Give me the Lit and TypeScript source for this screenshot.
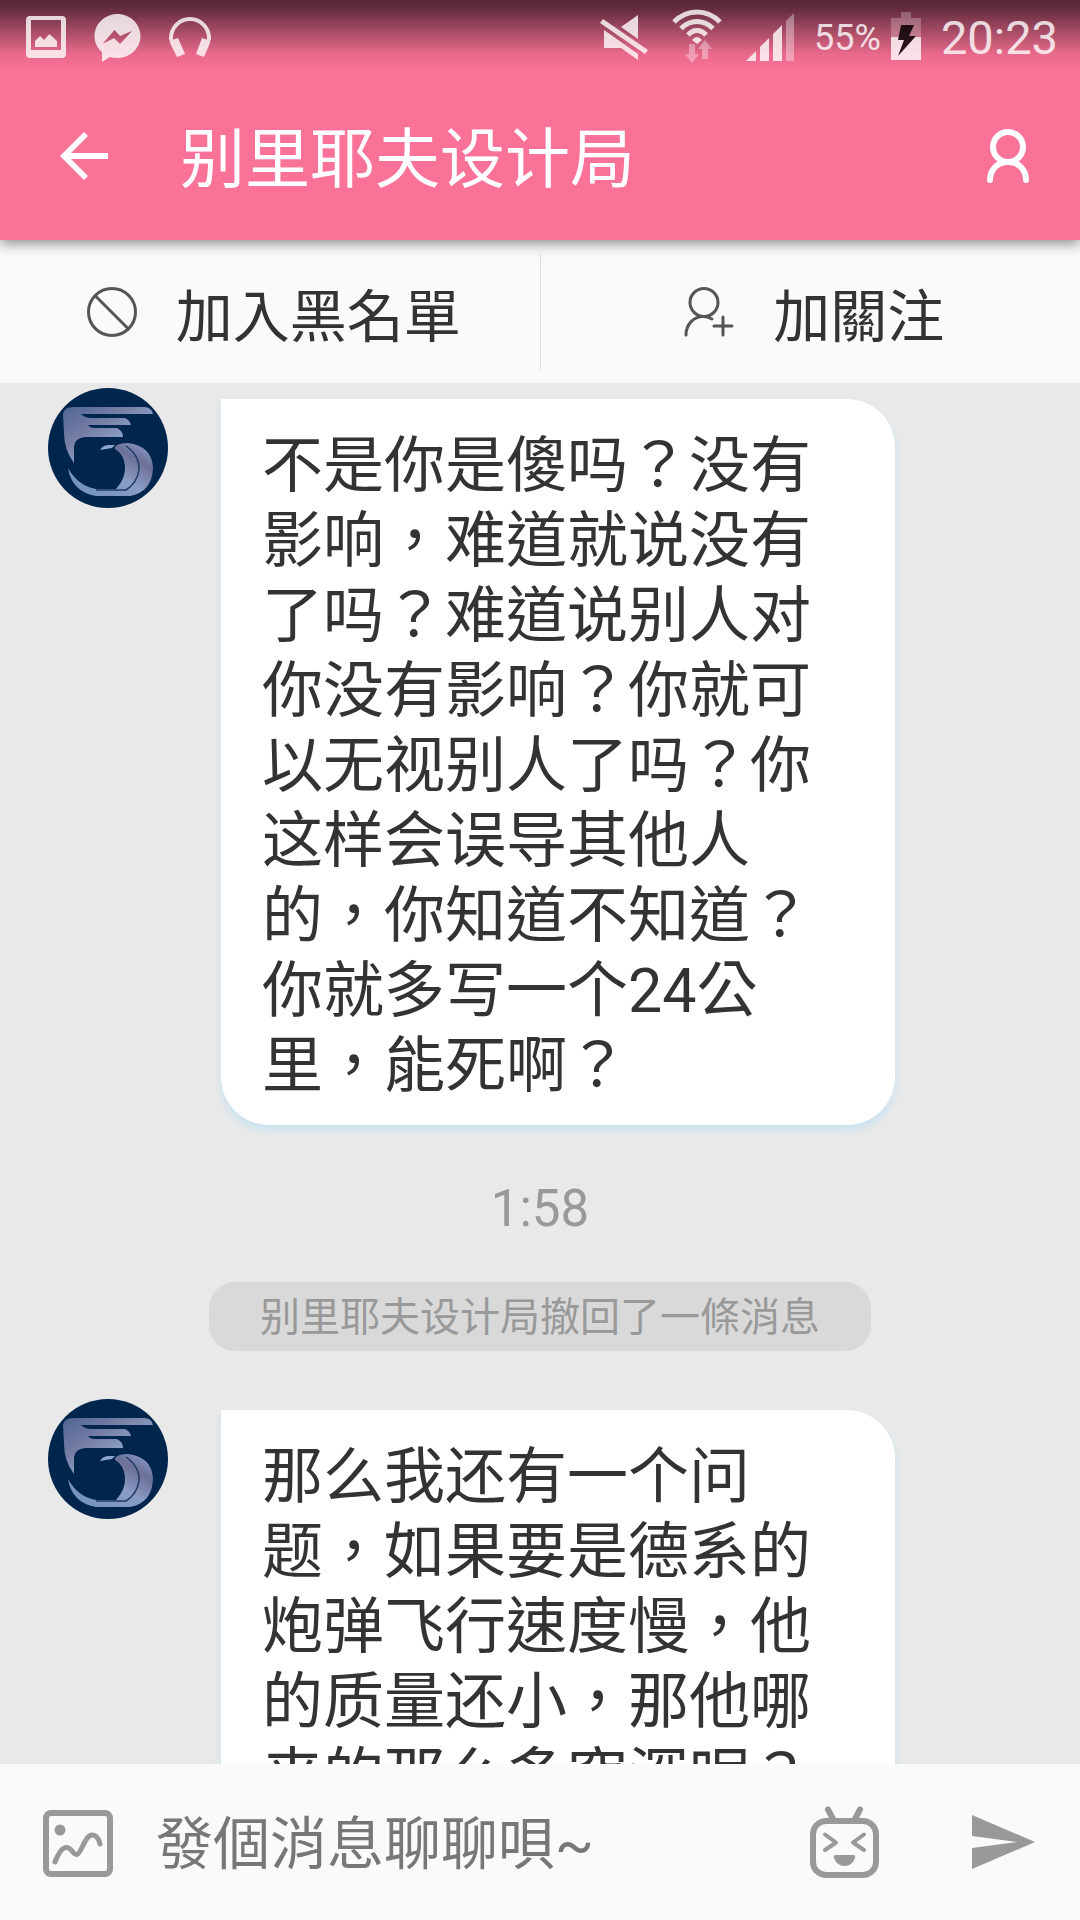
import { LitElement, html, css } from "lit";
import { customElement, property } from "lit/decorators.js";

type Entry =
  | { kind: "message"; text: string }
  | { kind: "time"; text: string }
  | { kind: "notice"; text: string };

const CONTACT = "别里耶夫设计局";

const ENTRIES: Entry[] = [
  {
    kind: "message",
    text: "不是你是傻吗？没有影响，难道就说没有了吗？难道说别人对你没有影响？你就可以无视别人了吗？你这样会误导其他人的，你知道不知道？你就多写一个24公里，能死啊？",
  },
  { kind: "time", text: "1:58" },
  { kind: "notice", text: "别里耶夫设计局撤回了一條消息" },
  {
    kind: "message",
    text: "那么我还有一个问题，如果要是德系的炮弹飞行速度慢，他的质量还小，那他哪来的那么多穿深呢？",
  },
];

@customElement("status-bar")
export class StatusBar extends LitElement {
  static styles = css`
    :host {
      display: flex;
      justify-content: space-between;
      height: 76px;
      padding: 0 22px 0 26px;
      color: #fff;
    }
    .group {
      display: flex;
      align-items: center;
      opacity: 0.8;
    }
    .left {
      gap: 28px;
    }
    .right {
      gap: 20px;
    }
    .signals {
      display: flex;
      gap: 24px;
    }
    svg {
      display: block;
      flex: none;
      height: 76px;
      fill: currentColor;
    }
    .power {
      display: flex;
      align-items: center;
      gap: 10px;
      font-size: 36px;
      line-height: 76px;
    }
    .clock {
      font-size: 47px;
      line-height: 76px;
    }
  `;

  render() {
    return html`
      <div class="group left">
        <svg width="40" viewBox="0 0 40 76" aria-hidden="true">
          <path fill-rule="evenodd" d="M4 16H36Q40 16 40 20V54Q40 58 36 58H4Q0 58 0 54V20Q0 16 4 16ZM5 20V50H35V20Z" />
          <path d="M9 47V41L14 36L18 40L23.500 34L31 41V47Z" />
        </svg>
        <svg width="47" viewBox="0 0 47 76" aria-hidden="true">
          <path
            fill-rule="evenodd"
            d="M23.500 14C36 14 46.500 24 46.500 36S36 58 23.500 58Q19 58 16 57L8 62V52C3 48 0.500 42 0.500 36C0.500 24 11 14 23.500 14ZM8.500 44L20.500 30L26 36L38 31L26 44L20 38Z"
          />
        </svg>
        <svg width="42" viewBox="0 0 42 76" aria-hidden="true">
          <path d="M2 40V38A19 19 0 0 1 40 38V40" fill="none" stroke="currentColor" stroke-width="4" />
          <path d="M0 36L3 40L9 38L16 54L8 57L1 43ZM42 36L39 40L33 38L27 54L35 57L41 43Z" />
        </svg>
      </div>
      <div class="group right">
        <div class="signals">
          <svg width="48" viewBox="0 0 48 76" aria-hidden="true">
            <path d="M21 27L38 15V39ZM4 30L38 54V60L21 48H4Z" />
            <path d="M3 19L48 50L45 54L0 23Z" />
          </svg>
          <svg width="50" viewBox="0 0 50 76" aria-hidden="true">
            <g fill="none" stroke="currentColor" stroke-width="5">
              <path d="M2 22Q12 12 25 12T48 22" />
              <path d="M9 28.500Q16 21.500 25 21.500T41 28.500" />
              <path d="M16 35Q20 30.500 25 30.500T34 35" />
            </g>
            <path d="M20 40Q25 34 30 40L25 44Z" />
            <path opacity="0.45" d="M17 44H23V54H27L20 63L13 54H17ZM30 59V49H26L33 40L40 49H36V59Z" />
          </svg>
          <svg width="48" viewBox="0 0 48 76" aria-hidden="true">
            <path d="M0 61L10 51V61ZM14 61V47L23 38V61ZM27 61V34L36 25V61Z" />
            <path opacity="0.45" d="M40 61V21L48 13V61Z" />
          </svg>
        </div>
        <div class="power">
          <span>55%</span>
          <svg width="30" viewBox="0 0 30 76" aria-hidden="true">
            <path opacity="0.3" d="M10 12H20V18H30V37H0V18H10Z" />
            <path d="M0 37H30V60H0Z" />
            <path fill="#000" d="M10 25H23L18 36H25L7 56L13 40H7Z" />
          </svg>
        </div>
        <span class="clock">20:23</span>
      </div>
    `;
  }
}

@customElement("contact-avatar")
export class ContactAvatar extends LitElement {
  static styles = css`
    :host {
      display: block;
      flex: none;
      width: 120px;
      height: 120px;
      border-radius: 50%;
      overflow: hidden;
      background: #00264e;
    }
    svg {
      display: block;
      width: 100%;
      height: 100%;
    }
  `;

  render() {
    return html`
      <svg viewBox="0 0 120 120" role="img" aria-label=${CONTACT}>
        <defs>
          <linearGradient id="wing" x1="0" y1="0" x2="1" y2="1">
            <stop offset="0" stop-color="#4f6592" />
            <stop offset="0.35" stop-color="#767ea6" />
            <stop offset="0.6" stop-color="#8c9fc4" />
            <stop offset="1" stop-color="#6a7fab" />
          </linearGradient>
          <linearGradient id="ring" x1="0" y1="1" x2="1" y2="0">
            <stop offset="0" stop-color="#6f8fbd" />
            <stop offset="0.5" stop-color="#8a9cc4" />
            <stop offset="0.75" stop-color="#6c6f98" />
            <stop offset="1" stop-color="#8fa6cf" />
          </linearGradient>
        </defs>
        <path
          fill="url(#wing)"
          d="M15 26Q16 19 25 19H97Q104 20 105 26H33Q37 30 43 30H77Q82 32 83 37H40Q42 40 47 40H69Q75 43 75 49H37Q27 50 26 58V75Q16 62 16 45Z"
        />
        <path fill="#8fa6cf" d="M52 62Q55 57 61 57H67L64 60Z" />
        <path
          fill="url(#ring)"
          d="M67 59Q70 55 80 55Q104 58 105 80Q104 104 82 108H48Q24 104 20 80Q30 98 48 101H68Q78 90 77 78Q76 66 67 61Z"
        />
        <path d="M78 58Q92 68 91 82Q89 95 78 102H48" fill="none" stroke="#1c3866" stroke-width="1.500" />
      </svg>
    `;
  }
}

@customElement("chat-message")
export class ChatMessage extends LitElement {
  @property() text = "";

  static styles = css`
    :host {
      display: flex;
      align-items: flex-start;
      gap: 53px;
      padding: 0 185px 0 48px;
    }
    .bubble {
      flex: 1;
      margin: 11px 0 0;
      padding: 30px 41px 21px;
      border-radius: 0 48px 48px 48px;
      background: #fff;
      box-shadow: 0 5px 9px #c8e2f0;
      color: #333;
      font-size: 61px;
      line-height: 75px;
    }
  `;

  render() {
    return html`<contact-avatar></contact-avatar>
      <p class="bubble">${this.text}</p>`;
  }
}

@customElement("app-root")
export class AppRoot extends LitElement {
  static styles = css`
    :host {
      display: flex;
      flex-direction: column;
      height: 100vh;
      background: #e9e9e9;
      font-family: Roboto, "Noto Sans CJK TC", sans-serif;
    }
    button {
      display: flex;
      align-items: center;
      justify-content: center;
      margin: 0;
      padding: 0;
      border: 0;
      background: none;
      color: inherit;
      font: inherit;
      cursor: pointer;
    }
    svg {
      display: block;
      flex: none;
    }
    .header {
      position: relative;
      flex: none;
      background: linear-gradient(#572534 0, #672e3f 10px, #a34a63 30px, #e9698c 54px, #fb7299 72px);
      box-shadow: 0 3px 13px rgba(0, 0, 0, 0.48);
      color: #fff;
    }
    .appbar {
      display: flex;
      align-items: center;
      height: 164px;
      padding: 0 48px 0 57px;
    }
    .title {
      flex: 1;
      margin: 0 0 0 69px;
      padding-top: 4px;
      font-size: 65px;
      font-weight: 400;
      line-height: 78px;
    }
    .actions {
      display: grid;
      grid-template-columns: 1fr 1px 1fr;
      flex: none;
      height: 143px;
      background: #fafafa;
      color: #333;
      font-size: 57px;
    }
    .action {
      gap: 39px;
      padding-left: 8px;
    }
    .divider {
      margin: 14px 0 12px;
      background: #dedede;
    }
    .line {
      fill: none;
      stroke: currentColor;
      stroke-linecap: round;
      stroke-linejoin: round;
    }
    .soft {
      color: #555;
    }
    .chat {
      flex: 1;
      min-height: 0;
      padding-top: 5px;
      overflow-y: auto;
      scrollbar-width: none;
    }
    .time {
      margin: 54px 0 43px;
      color: #999;
      font-size: 51px;
      line-height: 60px;
      text-align: center;
    }
    .notice {
      width: fit-content;
      margin: 0 auto 48px;
      padding: 3px 51px 0;
      border-radius: 26px;
      background: #d9d9d9;
      color: #999;
      font-size: 40px;
      line-height: 66px;
    }
    .composer {
      display: flex;
      align-items: center;
      flex: none;
      box-sizing: border-box;
      height: 156px;
      padding: 0 44px 0 43px;
      background: #fafafa;
      color: #999;
    }
    .field {
      flex: 1;
      min-width: 0;
      height: 84px;
      margin: 0 40px 0 43px;
      padding: 4px 0 0;
      border: 0;
      outline: 0;
      background: none;
      color: #333;
      font: inherit;
      font-size: 57px;
    }
    .field::placeholder {
      color: #777;
      opacity: 1;
    }
    .send {
      margin-left: 91px;
    }
  `;

  private renderEntry(entry: Entry) {
    switch (entry.kind) {
      case "message":
        return html`<chat-message .text=${entry.text}></chat-message>`;
      case "time":
        return html`<p class="time">${entry.text}</p>`;
      case "notice":
        return html`<p class="notice">${entry.text}</p>`;
    }
  }

  render() {
    return html`
      <header class="header">
        <status-bar></status-bar>
        <div class="appbar">
          <button type="button" aria-label="返回">
            <svg width="54" height="56" viewBox="0 0 54 56">
              <path d="M27 2L31 6L14 23H51V29H14L31 46L27 50L3 26Z" fill="currentColor" />
            </svg>
          </button>
          <h1 class="title">${CONTACT}</h1>
          <button type="button" aria-label="個人空間">
            <svg class="line" width="48" height="60" viewBox="0 0 48 60" stroke-width="6">
              <circle cx="24" cy="19" r="15" />
              <path d="M6 52C6 42 13 34 24 34S42 42 42 52" />
            </svg>
          </button>
        </div>
      </header>
      <nav class="actions">
        <button class="action" type="button">
          <svg class="line soft" width="50" height="50" viewBox="0 0 50 50" stroke-width="3">
            <circle cx="25" cy="25" r="23.500" />
            <path d="M8.500 9L41.500 42" />
          </svg>
          加入黑名單
        </button>
        <span class="divider"></span>
        <button class="action" type="button">
          <svg class="line soft" width="50" height="50" viewBox="0 0 50 50" stroke-width="3">
            <circle cx="20" cy="15.500" r="14" />
            <path d="M2 48C2 37 10 29.500 19 29.500Q24 29.500 28 32M39 30V48M30 39H48" />
          </svg>
          加關注
        </button>
      </nav>
      <main class="chat">${ENTRIES.map((entry) => this.renderEntry(entry))}</main>
      <form class="composer" @submit=${(event: Event) => event.preventDefault()}>
        <button type="button" aria-label="圖片">
          <svg class="line" width="70" height="72" viewBox="0 0 70 72" stroke-width="6">
            <rect x="3" y="7" width="64" height="61" rx="5" />
            <circle cx="17" cy="24" r="5.500" fill="currentColor" stroke="none" />
            <path d="M12 56C15 48 19 41 24 41.500S30 49 34 48.500S42 29 49 29Q55 29 57 38" stroke-width="5" />
          </svg>
        </button>
        <input class="field" type="text" placeholder="發個消息聊聊唄~" aria-label="發個消息聊聊唄~" />
        <button type="button" aria-label="表情">
          <svg class="line" width="70" height="72" viewBox="0 0 70 72" stroke-width="6">
            <path d="M18 3.500L23 13M50 3.500L45 13" />
            <rect x="3" y="15" width="63" height="54" rx="13" />
            <path d="M15 28.500L26 36.500L15 44M54 28.500L43 36.500L54 44" stroke-width="4" />
            <path d="M26 49H43Q46 49 45 52Q42 60 34.500 60T24 52Q23 49 26 49Z" fill="currentColor" stroke="none" />
          </svg>
        </button>
        <button class="send" type="submit" aria-label="發送">
          <svg width="65" height="54" viewBox="0 0 65 54" fill="currentColor">
            <path d="M1 0L64 27L1 54V33L46 27L1 21Z" />
          </svg>
        </button>
      </form>
    `;
  }
}
